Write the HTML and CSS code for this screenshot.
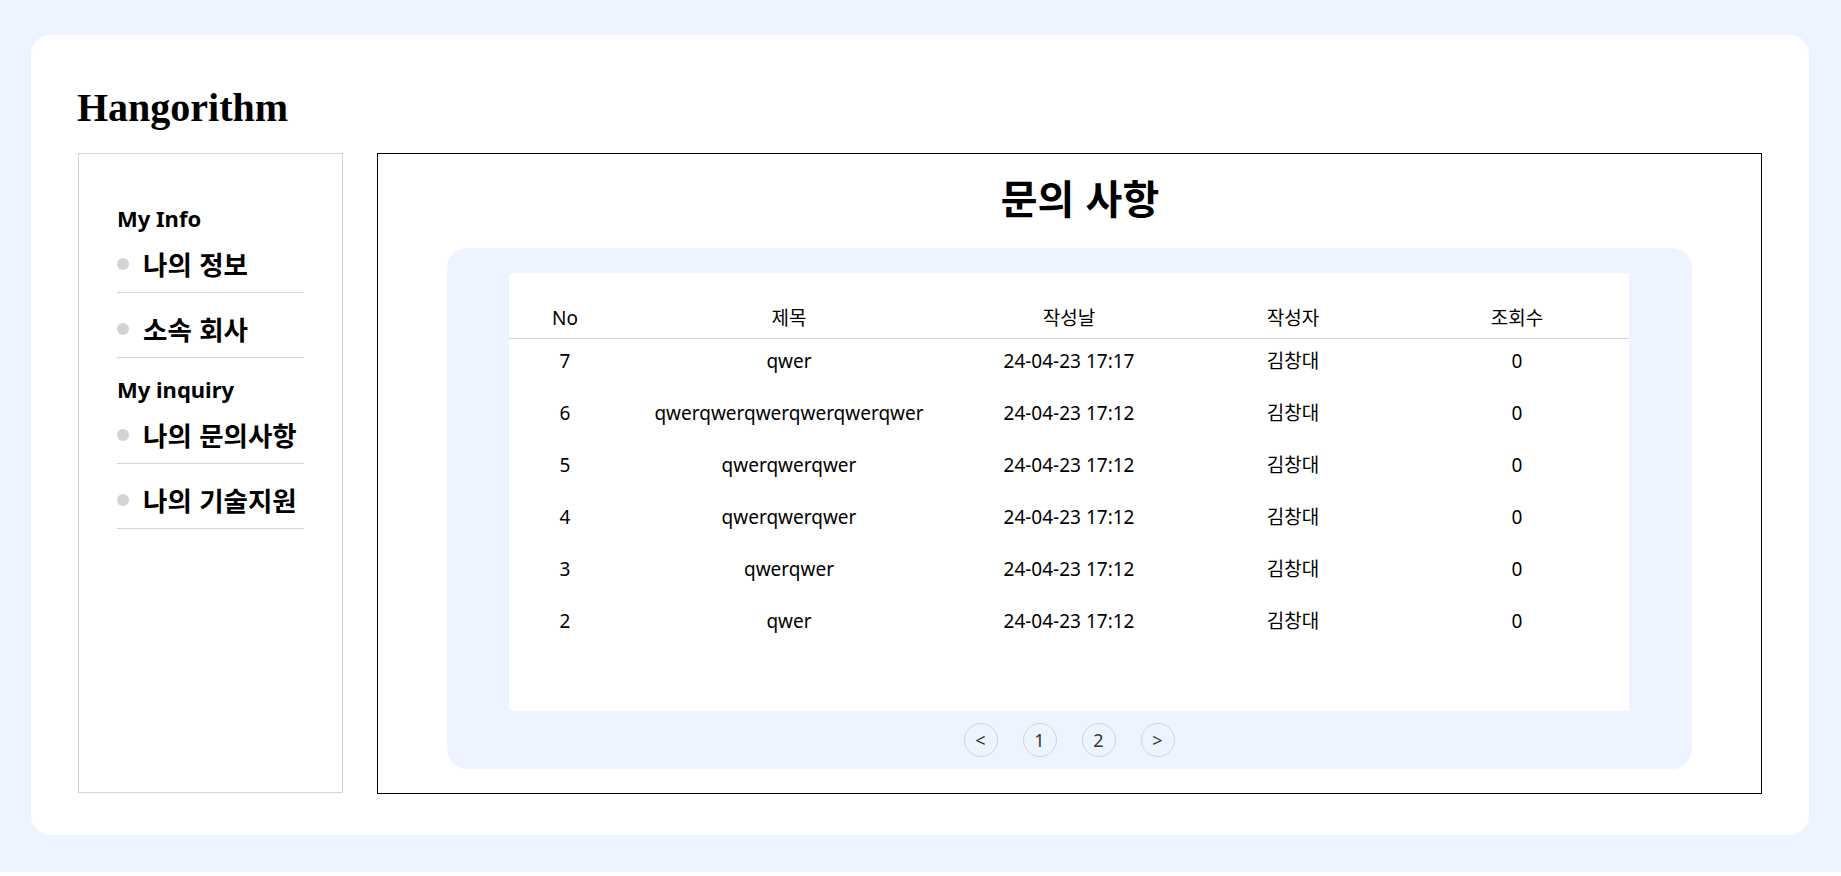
FILE: index.html
```html
<!DOCTYPE html>
<html lang="ko">
<head>
<meta charset="utf-8">
<title>Hangorithm - 문의 사항</title>
<link rel="stylesheet" href="styles.css">
</head>
<body>
<div class="page">
  <div class="card">
    <h1 class="logo">Hangorithm</h1>
    <div class="layout">
      <aside class="sidebar">
        <div class="group-title">My Info</div>
        <ul class="menu">
          <li><span class="dot"></span>나의 정보</li>
          <li><span class="dot"></span>소속 회사</li>
        </ul>
        <div class="group-title second">My inquiry</div>
        <ul class="menu">
          <li><span class="dot"></span>나의 문의사항</li>
          <li><span class="dot"></span>나의 기술지원</li>
        </ul>
      </aside>
      <main class="content">
        <h2 class="title">문의 사항</h2>
        <div class="panel">
          <div class="board">
            <table class="list">
              <colgroup>
                <col class="c-no"><col class="c-title"><col class="c-date"><col class="c-writer"><col class="c-views">
              </colgroup>
              <thead>
                <tr><th>No</th><th>제목</th><th>작성날</th><th>작성자</th><th>조회수</th></tr>
              </thead>
              <tbody>
                <tr><td>7</td><td>qwer</td><td>24-04-23 17:17</td><td>김창대</td><td>0</td></tr>
                <tr><td>6</td><td>qwerqwerqwerqwerqwerqwer</td><td>24-04-23 17:12</td><td>김창대</td><td>0</td></tr>
                <tr><td>5</td><td>qwerqwerqwer</td><td>24-04-23 17:12</td><td>김창대</td><td>0</td></tr>
                <tr><td>4</td><td>qwerqwerqwer</td><td>24-04-23 17:12</td><td>김창대</td><td>0</td></tr>
                <tr><td>3</td><td>qwerqwer</td><td>24-04-23 17:12</td><td>김창대</td><td>0</td></tr>
                <tr><td>2</td><td>qwer</td><td>24-04-23 17:12</td><td>김창대</td><td>0</td></tr>
              </tbody>
            </table>
          </div>
          <div class="pager">
            <button class="pg">&lt;</button>
            <button class="pg">1</button>
            <button class="pg">2</button>
            <button class="pg">&gt;</button>
          </div>
        </div>
      </main>
    </div>
  </div>
</div>
</body>
</html>
```
FILE: styles.css
```css
* { box-sizing: border-box; }
html, body { margin: 0; padding: 0; background: #ffffff; }
body {
  font-family: "Noto Sans", "Noto Sans CJK KR", sans-serif;
  color: #000;
}
.page {
  background: #eef4ff;
  height: 872px;
  padding: 35px 32px 0 31px;
}
.card {
  background: #ffffff;
  border-radius: 20px;
  height: 800px;
  padding: 53px 47px 0 47px;
}
.logo {
  margin: 0 0 26px -1px;
  font-family: "Liberation Serif", "Times New Roman", serif;
  font-weight: 700;
  font-size: 40px;
  line-height: 39px;
}
.layout {
  display: flex;
  align-items: flex-start;
  gap: 34px;
}
.sidebar {
  width: 265px;
  height: 640px;
  border: 1px solid #d3d3d3;
  padding: 54px 0 0 38px;
}
.group-title {
  font-weight: 700;
  font-size: 22px;
  line-height: 20px;
}
.group-title.second { margin-top: 21px; }
.menu {
  list-style: none;
  margin: 0;
  padding: 0;
  width: 187px;
}
.menu li {
  display: flex;
  align-items: center;
  gap: 14px;
  padding: 20px 0 12px;
  border-bottom: 1px solid #d3d3d3;
  font-family: "Noto Sans CJK KR", sans-serif;
  font-weight: 700;
  font-size: 26.5px;
  line-height: 32px;
  white-space: nowrap;
}
.dot {
  width: 12px;
  height: 12px;
  border-radius: 50%;
  background: #d3d3d3;
  flex: none;
}
.content {
  width: 1385px;
  border: 1px solid #000;
  padding: 0 69px 24px 69px;
}
.title {
  margin: 20px 0 28px;
  padding-left: 21px;
  text-align: center;
  font-family: "Noto Sans CJK KR", sans-serif;
  font-weight: 700;
  font-size: 40px;
  line-height: 46px;
}
.panel {
  background: #eef4ff;
  border-radius: 20px;
  padding: 25px 63px 0 62px;
}
.board {
  background: #ffffff;
  height: 438px;
  padding-top: 20px;
}
.list {
  width: 100%;
  border-collapse: collapse;
  table-layout: fixed;
  font-size: 19px;
  line-height: 24px;
}
.c-no { width: 10%; }
.c-title { width: 30%; }
.c-date, .c-writer, .c-views { width: 20%; }
.list th {
  font-weight: 400;
  padding: 13px 0 8px;
  border-bottom: 1px solid #d3d3d3;
  text-align: center;
}
.list td {
  padding: 10px 0 18px;
  text-align: center;
  white-space: nowrap;
}
.pager {
  height: 58px;
  display: flex;
  align-items: center;
  justify-content: center;
  gap: 25px;
}
.pg {
  width: 34px;
  height: 34px;
  border-radius: 50%;
  border: 1px solid #cfd3da;
  background: transparent;
  color: #333;
  font-family: "Noto Sans", sans-serif;
  font-size: 18px;
  padding: 0;
  line-height: 32px;
}
```
